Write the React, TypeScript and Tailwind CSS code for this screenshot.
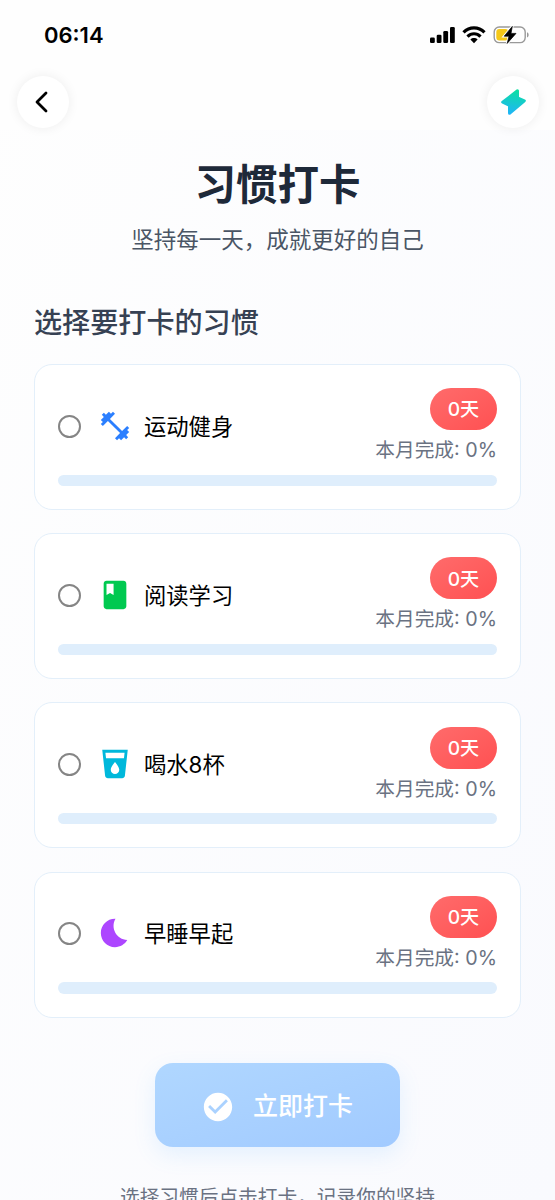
import { MdFitnessCenter, MdBook, MdLocalDrink, MdBedtime, MdCheckCircle } from "react-icons/md";
import type { IconType } from "react-icons";

type Habit = { name: string; Icon: IconType; color: string };

const habits: Habit[] = [
  { name: "运动健身", Icon: MdFitnessCenter, color: "text-[#2b7fff]" },
  { name: "阅读学习", Icon: MdBook, color: "text-[#00c950]" },
  { name: "喝水8杯", Icon: MdLocalDrink, color: "text-[#00b8db]" },
  { name: "早睡早起", Icon: MdBedtime, color: "text-[#ad46ff]" },
];

function StatusIcons() {
  return (
    <svg className="block h-[20px] w-[102px]" viewBox="0 0 102 20">
      <rect x="0" y="12.5" width="4.8" height="5.5" rx="1.3" />
      <rect x="6.7" y="9.7" width="4.8" height="8.3" rx="1.3" />
      <rect x="13.3" y="6" width="4.8" height="12" rx="1.3" />
      <rect x="20" y="2" width="4.8" height="16" rx="1.3" />
      <g fill="none" stroke="#000" strokeWidth="3.2">
        <path d="M33.5 7.4C39.5 1.4 48.5 1.4 54.5 7.4" />
        <path d="M37.5 11.6C41.3 7.8 46.7 7.8 50.5 11.6" />
      </g>
      <path d="M40.4 14.4C42.4 12.5 45.6 12.5 47.6 14.4L44 18.2Z" />
      <rect x="64.2" y="2" width="31" height="15.6" rx="5" fill="none" stroke="#999" strokeWidth="1.4" />
      <path d="M97 7.2C99.2 8 99.2 11.6 97 12.4Z" fill="#999" />
      <rect x="66.3" y="4" width="12" height="11.6" rx="3" fill="#f5c817" />
      <path d="M82.3 1.4L74.2 11.2H79L77.2 18.4L86 8.4H81Z" stroke="#fff" strokeWidth="2.6" />
      <path d="M82.3 1.4L74.2 11.2H79L77.2 18.4L86 8.4H81Z" stroke="#000" strokeWidth="0.7" strokeLinejoin="round" />
    </svg>
  );
}

function HabitCard({ name, Icon, color }: Habit) {
  return (
    <article className="h-[146px] rounded-[18px] border-[1.5px] border-[#e3effa] bg-white px-[23px] pt-[23px]">
      <div className="flex h-[76.5px] items-center">
        <span className="size-[23px] shrink-0 rounded-full border-2 border-[#858585]" />
        <Icon className={`mb-px ml-[17px] size-[34px] shrink-0 ${color}`} />
        <span className="ml-[12px] pt-px text-[22.3px] leading-8 text-black">{name}</span>
        <div className="ml-auto flex flex-col items-end">
          <span className="mt-[3px] flex h-[42px] w-[67px] items-center justify-center rounded-full bg-linear-to-br from-[#ff6b6b] to-[#ff5052] pt-px text-[19.2px] font-medium text-white">
            0天
          </span>
          <span className="mt-[3px] text-[19.7px] leading-[34px] whitespace-nowrap text-[#6a7282]">本月完成: 0%</span>
        </div>
      </div>
      <div className="mt-[10px] h-[11.5px] rounded-full bg-[#dfeefc]" />
    </article>
  );
}

export default function App() {
  return (
    <div className="flex h-[1200px] w-[555px] flex-col overflow-hidden bg-linear-to-br from-[#fefefe] to-[#f9fafe] font-[Inter,'Noto_Sans_CJK_SC',sans-serif]">
      <header className="h-[130px] shrink-0 bg-[#fefefe]">
        <div className="flex h-[70px] items-center justify-between pr-[23px] pl-[44px]">
          <span className="pt-px text-[22px] font-semibold text-black">06:14</span>
          <StatusIcons />
        </div>
        <nav className="flex justify-between px-[16.5px] pt-[6px]">
          <button className="flex size-[52px] items-center justify-center rounded-full bg-white shadow-[0_0_12px_rgba(0,0,0,0.07)]">
            <svg className="mr-[2px] size-[24px]" viewBox="0 0 24 24" fill="none" stroke="#000" strokeWidth="2.8" strokeLinecap="round" strokeLinejoin="round">
              <path d="M16 3L7 12L16 21" />
            </svg>
          </button>
          <button className="flex size-[52px] items-center justify-center rounded-full bg-white shadow-[0_0_12px_rgba(0,0,0,0.07)]">
            <svg className="size-[28px]" viewBox="0 0 28 28">
              <defs>
                <linearGradient id="bolt" gradientUnits="userSpaceOnUse" x1="16" y1="1" x2="12" y2="27">
                  <stop offset="0" stopColor="#0be0a0" />
                  <stop offset="1" stopColor="#20b4fa" />
                </linearGradient>
              </defs>
              <path d="M18.5 2.7L3.7 14.2L10.5 17.3V25.3L25.3 12.8L18.5 9.8Z" fill="url(#bolt)" stroke="url(#bolt)" strokeWidth="3" strokeLinejoin="round" />
            </svg>
          </button>
        </nav>
      </header>
      <main className="flex flex-col px-[34px]">
        <h1 className="mt-[25px] text-center text-[41.5px] leading-[60px] font-bold text-[#1e2939]">习惯打卡</h1>
        <p className="mt-[8px] text-center text-[22.5px] leading-[34px] text-[#4a5565]">坚持每一天，成就更好的自己</p>
        <h2 className="mt-[46px] text-[28.1px] leading-[40px] font-medium text-[#364153]">选择要打卡的习惯</h2>
        <section className="mt-[21px] flex flex-col gap-[23.2px]">
          {habits.map((habit) => (
            <HabitCard key={habit.name} {...habit} />
          ))}
        </section>
        <button className="mt-[45.7px] flex h-[84px] w-[245px] items-center self-center rounded-[18px] bg-linear-to-br from-[#b0d7ff] to-[#a1caff] pl-[46px] text-white shadow-[0_8px_22px_rgba(79,172,254,0.13)]">
          <MdCheckCircle className="mt-[4px] size-[34px]" />
          <span className="ml-[18px] pt-[3px] text-[25px] font-medium">立即打卡</span>
        </button>
        <p className="mt-[33px] text-center text-[19.7px] leading-[34px] text-[#6a7282]">选择习惯后点击打卡，记录你的坚持</p>
      </main>
    </div>
  );
}
